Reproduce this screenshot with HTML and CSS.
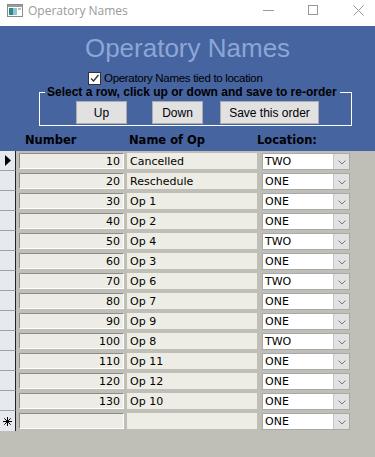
FILE: index.html
```html
<!DOCTYPE html>
<html lang="en">
<head>
<meta charset="UTF-8">
<meta name="viewport" content="width=device-width, initial-scale=1.0">
<title>Operatory Names</title>
<link rel="stylesheet" href="styles.css">
</head>
<body>
<div class="titlebar">
  <svg class="app-icon" width="16" height="13" viewBox="0 0 16 13">
    <rect x="0.5" y="0.5" width="15" height="12" fill="#fff" stroke="#8a8a8a"/>
    <rect x="1" y="1" width="15" height="2" fill="#9a9a9a"/>
    <rect x="2" y="4" width="4" height="7" fill="#2f8a8a"/>
    <rect x="6" y="4" width="4" height="7" fill="#8fc3d6"/>
    <rect x="11" y="4" width="3" height="2" fill="#bbb"/>
  </svg>
  <span class="title">Operatory Names</span>
  <div class="win-btns">
    <svg width="11" height="11" viewBox="0 0 11 11"><line x1="0" y1="5.5" x2="11" y2="5.5" stroke="#999"/></svg>
    <svg width="11" height="11" viewBox="0 0 11 11"><rect x="0.5" y="0.5" width="9" height="9" fill="none" stroke="#999"/></svg>
    <svg width="11" height="11" viewBox="0 0 11 11"><path d="M0.5 0.5 L10.5 10.5 M10.5 0.5 L0.5 10.5" stroke="#999" fill="none"/></svg>
  </div>
</div>

<div class="header">
  <h1>Operatory Names</h1>
  <label class="tied">
    <span class="check">
      <svg width="11" height="11" viewBox="0 0 11 11"><path d="M2 5.5 L4.5 8 L9.5 2" stroke="#333" stroke-width="1.4" fill="none"/></svg>
    </span>
    Operatory Names tied to location
  </label>
  <fieldset class="reorder">
    <legend>Select a row, click up or down and save to re-order</legend>
    <div class="btn-row">
      <button class="btn">Up</button>
      <button class="btn btn-down">Down</button>
      <button class="btn btn-save">Save this order</button>
    </div>
  </fieldset>
  <div class="col-heads">
    <span class="head-num">Number</span>
    <span class="head-name">Name of Op</span>
    <span class="head-loc">Location:</span>
  </div>
</div>

<div class="grid">
  <div class="row">
    <div class="sel"><svg width="6" height="11" viewBox="0 0 6 11"><polygon points="0,0 6,5.5 0,11" fill="#000"/></svg></div>
    <div class="cell num">10</div><div class="cell name">Cancelled</div>
    <div class="combo"><span class="combo-val">TWO</span><span class="arrow"><svg width="8" height="5" viewBox="0 0 8 5"><path d="M0.5 0.5 L4 4 L7.5 0.5" stroke="#777" fill="none"/></svg></span></div>
  </div>
  <div class="row">
    <div class="sel"></div>
    <div class="cell num">20</div><div class="cell name">Reschedule</div>
    <div class="combo"><span class="combo-val">ONE</span><span class="arrow"><svg width="8" height="5" viewBox="0 0 8 5"><path d="M0.5 0.5 L4 4 L7.5 0.5" stroke="#777" fill="none"/></svg></span></div>
  </div>
  <div class="row">
    <div class="sel"></div>
    <div class="cell num">30</div><div class="cell name">Op 1</div>
    <div class="combo"><span class="combo-val">ONE</span><span class="arrow"><svg width="8" height="5" viewBox="0 0 8 5"><path d="M0.5 0.5 L4 4 L7.5 0.5" stroke="#777" fill="none"/></svg></span></div>
  </div>
  <div class="row">
    <div class="sel"></div>
    <div class="cell num">40</div><div class="cell name">Op 2</div>
    <div class="combo"><span class="combo-val">ONE</span><span class="arrow"><svg width="8" height="5" viewBox="0 0 8 5"><path d="M0.5 0.5 L4 4 L7.5 0.5" stroke="#777" fill="none"/></svg></span></div>
  </div>
  <div class="row">
    <div class="sel"></div>
    <div class="cell num">50</div><div class="cell name">Op 4</div>
    <div class="combo"><span class="combo-val">TWO</span><span class="arrow"><svg width="8" height="5" viewBox="0 0 8 5"><path d="M0.5 0.5 L4 4 L7.5 0.5" stroke="#777" fill="none"/></svg></span></div>
  </div>
  <div class="row">
    <div class="sel"></div>
    <div class="cell num">60</div><div class="cell name">Op 3</div>
    <div class="combo"><span class="combo-val">ONE</span><span class="arrow"><svg width="8" height="5" viewBox="0 0 8 5"><path d="M0.5 0.5 L4 4 L7.5 0.5" stroke="#777" fill="none"/></svg></span></div>
  </div>
  <div class="row">
    <div class="sel"></div>
    <div class="cell num">70</div><div class="cell name">Op 6</div>
    <div class="combo"><span class="combo-val">TWO</span><span class="arrow"><svg width="8" height="5" viewBox="0 0 8 5"><path d="M0.5 0.5 L4 4 L7.5 0.5" stroke="#777" fill="none"/></svg></span></div>
  </div>
  <div class="row">
    <div class="sel"></div>
    <div class="cell num">80</div><div class="cell name">Op 7</div>
    <div class="combo"><span class="combo-val">ONE</span><span class="arrow"><svg width="8" height="5" viewBox="0 0 8 5"><path d="M0.5 0.5 L4 4 L7.5 0.5" stroke="#777" fill="none"/></svg></span></div>
  </div>
  <div class="row">
    <div class="sel"></div>
    <div class="cell num">90</div><div class="cell name">Op 9</div>
    <div class="combo"><span class="combo-val">ONE</span><span class="arrow"><svg width="8" height="5" viewBox="0 0 8 5"><path d="M0.5 0.5 L4 4 L7.5 0.5" stroke="#777" fill="none"/></svg></span></div>
  </div>
  <div class="row">
    <div class="sel"></div>
    <div class="cell num">100</div><div class="cell name">Op 8</div>
    <div class="combo"><span class="combo-val">TWO</span><span class="arrow"><svg width="8" height="5" viewBox="0 0 8 5"><path d="M0.5 0.5 L4 4 L7.5 0.5" stroke="#777" fill="none"/></svg></span></div>
  </div>
  <div class="row">
    <div class="sel"></div>
    <div class="cell num">110</div><div class="cell name">Op 11</div>
    <div class="combo"><span class="combo-val">ONE</span><span class="arrow"><svg width="8" height="5" viewBox="0 0 8 5"><path d="M0.5 0.5 L4 4 L7.5 0.5" stroke="#777" fill="none"/></svg></span></div>
  </div>
  <div class="row">
    <div class="sel"></div>
    <div class="cell num">120</div><div class="cell name">Op 12</div>
    <div class="combo"><span class="combo-val">ONE</span><span class="arrow"><svg width="8" height="5" viewBox="0 0 8 5"><path d="M0.5 0.5 L4 4 L7.5 0.5" stroke="#777" fill="none"/></svg></span></div>
  </div>
  <div class="row">
    <div class="sel"></div>
    <div class="cell num">130</div><div class="cell name">Op 10</div>
    <div class="combo"><span class="combo-val">ONE</span><span class="arrow"><svg width="8" height="5" viewBox="0 0 8 5"><path d="M0.5 0.5 L4 4 L7.5 0.5" stroke="#777" fill="none"/></svg></span></div>
  </div>
  <div class="row row-new">
    <div class="sel">
      <svg width="9" height="9" viewBox="0 0 9 9"><path d="M4.5 0 V9 M0 4.5 H9 M1.3 1.3 L7.7 7.7 M7.7 1.3 L1.3 7.7" stroke="#000" fill="none"/></svg>
    </div>
    <div class="cell num"></div><div class="cell name"></div>
    <div class="combo"><span class="combo-val">ONE</span><span class="arrow"><svg width="8" height="5" viewBox="0 0 8 5"><path d="M0.5 0.5 L4 4 L7.5 0.5" stroke="#777" fill="none"/></svg></span></div>
  </div>
</div>
</body>
</html>
```

FILE: styles.css
```css
body {
  margin: 0;
  background-color: #bfbfb7;
  font-family: "DejaVu Sans", sans-serif;
  font-size: 11px;
  color: #000;
}
.titlebar {
  height: 26px;
  background-color: #fff;
  display: flex;
  align-items: center;
}
.app-icon {
  margin-left: 7px;
  margin-top: -5px;
}
.title {
  margin-left: 5px;
  margin-top: -5px;
  font-family: "Open Sans", sans-serif;
  font-size: 12px;
  color: #9a9a9a;
}
.win-btns {
  margin-left: auto;
  margin-right: 11px;
  margin-top: -5px;
  display: flex;
  gap: 34px;
}
.header {
  background-color: #4664a0;
  height: 125px;
}
.header h1 {
  margin: 0;
  padding-top: 7px;
  height: 38px;
  line-height: 30px;
  text-align: center;
  font-family: "Liberation Sans", sans-serif;
  font-weight: normal;
  font-size: 26px;
  color: #8ca6d6;
}
.tied {
  display: flex;
  align-items: center;
  height: 14px;
  padding-left: 88px;
  font-family: "Liberation Sans", sans-serif;
  font-size: 11.5px;
  letter-spacing: -0.3px;
  color: #000;
}
.check {
  width: 11px;
  height: 11px;
  border: 1px solid #333;
  background-color: #fff;
  margin-right: 3px;
  display: flex;
}
.reorder {
  margin: 0 0 0 39px;
  width: 311px;
  padding: 0 0 1px 0;
  border: 1px solid #fff;
  min-width: 0;
}
.reorder legend {
  margin-left: 5px;
  padding: 0 3px 0 2px;
  font-family: "Liberation Sans", sans-serif;
  font-weight: bold;
  font-size: 12px;
  line-height: 14px;
  color: #000;
}
.btn-row {
  display: flex;
  margin-left: 36px;
  margin-top: 2px;
}
.btn {
  width: 51px;
  height: 23px;
  padding: 0;
  background-color: #e1e1e1;
  border: 1px solid #adadad;
  font-family: "Liberation Sans", sans-serif;
  font-size: 12px;
  color: #000;
}
.btn-down {
  margin-left: 25px;
}
.btn-save {
  margin-left: 17px;
  width: 99px;
}
.col-heads {
  display: flex;
  padding-top: 7px;
  padding-left: 25px;
  line-height: 14px;
  font-weight: bold;
  font-size: 11.5px;
}
.head-num {
  width: 104px;
}
.head-name {
  width: 128px;
}
.row {
  display: flex;
  align-items: center;
  height: 20px;
}
.sel {
  width: 16px;
  height: 20px;
  box-sizing: border-box;
  background-color: #e6e9ef;
  border-right: 1px solid #222;
  border-bottom: 1px solid #9ea3ab;
  display: flex;
  align-items: center;
  padding-left: 5px;
}
.row-new .sel {
  border-bottom: 2px solid #222;
  height: 22px;
  padding-left: 3px;
  align-self: flex-start;
}
.cell {
  height: 16px;
  box-sizing: border-box;
  background-color: #eeede5;
  line-height: 15px;
  white-space: nowrap;
}
.num {
  margin-left: 3px;
  width: 105px;
  text-align: right;
  padding-right: 3px;
  border-top: 1px solid #8c8c8c;
  border-left: 1px solid #8c8c8c;
  border-bottom: 1px solid #fff;
  border-right: 1px solid #fff;
}
.name {
  margin-left: 3px;
  width: 130px;
  padding-left: 3px;
  line-height: 17px;
}
.combo {
  margin-left: 5px;
  width: 88px;
  height: 17px;
  box-sizing: border-box;
  background-color: #fff;
  border: 1px solid #a9a9a9;
  display: flex;
}
.combo-val {
  flex: 1;
  padding-left: 2px;
  line-height: 15px;
}
.arrow {
  width: 16px;
  background-color: #e1e1e1;
  border-left: 1px solid #c8c8c8;
  display: flex;
  align-items: center;
  justify-content: center;
  padding-top: 2px;
  box-sizing: border-box;
}
```
